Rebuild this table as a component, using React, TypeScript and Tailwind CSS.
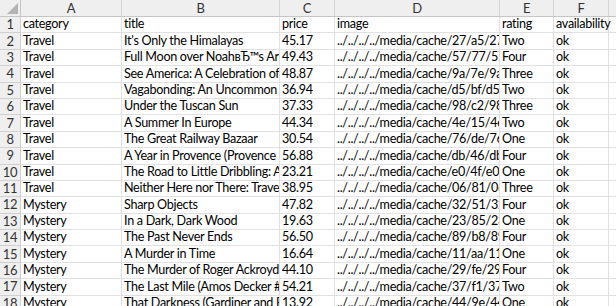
const columns = [
  { letter: "A", width: "w-[101px]" },
  { letter: "B", width: "w-[158px]" },
  { letter: "C", width: "w-[55px]" },
  { letter: "D", width: "w-[165px]" },
  { letter: "E", width: "w-[54px]" },
  { letter: "F", width: "w-[55px]" },
  { letter: "G", width: "w-[60px]" },
];

const rows: string[][] = [
  ["category", "title", "price", "image", "rating", "availability"],
  ["Travel", "It's Only the Himalayas", "45.17", "../../../../media/cache/27/a5/27a53d0bb95bdd88288eaf66c9230d7e.jpg", "Two", "ok"],
  ["Travel", "Full Moon over NoahвЂ™s Ark: An Odyssey to Mount Ararat and Beyond", "49.43", "../../../../media/cache/57/77/57770cac1628f4407636635f4b85e88c.jpg", "Four", "ok"],
  ["Travel", "See America: A Celebration of Our National Parks & Treasured Sites", "48.87", "../../../../media/cache/9a/7e/9a7e63f12829df4b43b31d110bf3dc2e.jpg", "Three", "ok"],
  ["Travel", "Vagabonding: An Uncommon Guide to the Art of Long-Term World Travel", "36.94", "../../../../media/cache/d5/bf/d5bf0090470b0b8ea46d9c166f7895aa.jpg", "Two", "ok"],
  ["Travel", "Under the Tuscan Sun", "37.33", "../../../../media/cache/98/c2/98c2e95c5fd1a4e7cd5f2b63c52826cb.jpg", "Three", "ok"],
  ["Travel", "A Summer In Europe", "44.34", "../../../../media/cache/4e/15/4e15150388702ebca2c5a523ac270539.jpg", "Two", "ok"],
  ["Travel", "The Great Railway Bazaar", "30.54", "../../../../media/cache/76/de/76de41867f323d7f1f4fbe2fdfc1b2ba.jpg", "One", "ok"],
  ["Travel", "A Year in Provence (Provence #1)", "56.88", "../../../../media/cache/db/46/db46159b05faa5d95262112bf9c29ddd.jpg", "Four", "ok"],
  ["Travel", "The Road to Little Dribbling: Adventures of an American in Britain", "23.21", "../../../../media/cache/e0/4f/e04f8eda2a2fa947aec17640202d9ab0.jpg", "One", "ok"],
  ["Travel", "Neither Here nor There: Travels in Europe", "38.95", "../../../../media/cache/06/81/0681530a7bc301caf5c3257e1b0f0750.jpg", "Three", "ok"],
  ["Mystery", "Sharp Objects", "47.82", "../../../../media/cache/32/51/3251cf3a3412f53f339e42cac2134093.jpg", "Four", "ok"],
  ["Mystery", "In a Dark, Dark Wood", "19.63", "../../../../media/cache/23/85/238570a1c284e730dbc737a7e631ae2b.jpg", "One", "ok"],
  ["Mystery", "The Past Never Ends", "56.50", "../../../../media/cache/89/b8/89b8c9a2e7f4f5f1b2d3a4c5e6f70812.jpg", "Four", "ok"],
  ["Mystery", "A Murder in Time", "16.64", "../../../../media/cache/11/aa/11aa6a9d0a0b7f4e9c5a2b3d4e5f6a7b.jpg", "One", "ok"],
  ["Mystery", "The Murder of Roger Ackroyd (Hercule Poirot #4)", "44.10", "../../../../media/cache/29/fe/29fe70cfa4c5c3e5b2a1d0e9f8c7b6a5.jpg", "Four", "ok"],
  ["Mystery", "The Last Mile (Amos Decker #2)", "54.21", "../../../../media/cache/37/f1/37f1b2c3d4e5f6a7b8c9d0e1f2a3b4c5.jpg", "Two", "ok"],
  ["Mystery", "That Darkness (Gardiner and Renner #1)", "13.92", "../../../../media/cache/44/9e/449e0a1b2c3d4e5f6a7b8c9d0e1f2a3b.jpg", "One", "ok"],
];

export default function App() {
  return (
    <div className="h-[306px] w-[616px] overflow-hidden bg-white font-['Lato','Open_Sans',sans-serif] text-[12.6px] leading-none tracking-[-0.3px] text-black">
      {/* column headers */}
      <div className="flex h-[17px] border-b border-[#c6c6c6] bg-[#efefef]">
        <div className="flex w-[21px] shrink-0 items-end justify-end border-r border-[#c6c6c6] p-[2px]">
          <svg width="11" height="11" viewBox="0 0 11 11">
            <polygon points="11,0 11,11 0,11" fill="#b4b4b4" />
          </svg>
        </div>
        {columns.map((c) => (
          <div
            key={c.letter}
            className={`${c.width} flex shrink-0 items-center justify-center border-r border-[#d4d4d4] text-[13px] text-[#333]`}
          >
            {c.letter}
          </div>
        ))}
      </div>

      {rows.map((row, i) => (
        <div key={i} className="flex h-[16.4px]">
          <div className="flex w-[21px] shrink-0 items-center justify-center border-r border-b border-[#d0d0d0] bg-[#efefef] text-[13px] text-[#333]">
            {i + 1}
          </div>
          {columns.map((c, j) => (
            <div
              key={c.letter}
              className={`${c.width} flex shrink-0 items-center whitespace-nowrap border-r border-b border-[#e1e1e1] pl-[2px] ${
                j === 5 ? "overflow-visible" : "overflow-hidden"
              }`}
            >
              {row[j] ?? ""}
            </div>
          ))}
        </div>
      ))}
    </div>
  );
}
